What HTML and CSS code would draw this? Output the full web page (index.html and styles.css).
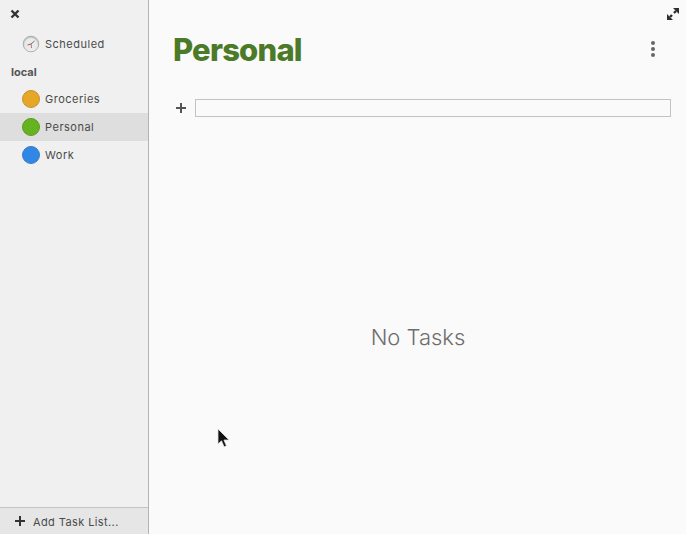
FILE: index.html
```html
<!DOCTYPE html>
<html lang="en">
<head>
	<meta charset="UTF-8">
	<title>Tasks</title>
	<link rel="stylesheet" href="styles.css">
</head>
<body>
	<div class="container">
		<aside class="sidebar">
			<div class="close-row">
				<svg width="10" height="10" viewBox="0 0 10 10"><path d="M1.500 1.500l7 7M8.500 1.500l-7 7" stroke="#333" stroke-width="2.400" fill="none"/></svg>
			</div>
			<div class="lists">
				<div class="item">
					<svg class="dot" width="18" height="18" viewBox="0 0 18 18">
						<defs><linearGradient id="face" x1="0" y1="0" x2="0" y2="1"><stop offset="0" stop-color="#c4c4c4"/><stop offset="1" stop-color="#f4f4f4"/></linearGradient></defs>
						<circle cx="9" cy="9" r="7.800" fill="url(#face)" stroke="#a0a0a0" stroke-width="0.800"/>
						<circle cx="9" cy="9" r="6" fill="#ebebeb"/>
						<path d="M9 9L12.500 6M9 9L5.500 10" stroke="#6e6e6e" stroke-width="1" fill="none"/>
						<path d="M9 9L9.500 13" stroke="#c66" stroke-width="1" fill="none"/>
					</svg>
					<span>Scheduled</span>
				</div>
				<div class="heading">local</div>
				<div class="item"><i class="dot orange"></i><span>Groceries</span></div>
				<div class="item active"><i class="dot green"></i><span>Personal</span></div>
				<div class="item"><i class="dot blue"></i><span>Work</span></div>
			</div>
			<footer class="add-list">
				<svg width="10" height="10" viewBox="0 0 10 10"><path d="M5 0v10M0 5h10" stroke="#333" stroke-width="2" fill="none"/></svg>
				<span>Add Task List...</span>
			</footer>
		</aside>
		<main class="content">
			<svg class="expand" width="14" height="14" viewBox="0 0 14 14">
				<path d="M7 1h6v6zM1 13h6L1 7z" fill="#2e2e2e"/>
				<path d="M10 4L8 6M4 10l2-2" stroke="#2e2e2e" stroke-width="2.400" fill="none"/>
			</svg>
			<header class="title-row">
				<h1>Personal</h1>
				<div class="menu"><i></i><i></i><i></i></div>
			</header>
			<div class="new-task">
				<svg width="12" height="12" viewBox="0 0 12 12"><path d="M6 1v10M1 6h10" stroke="#555" stroke-width="2" fill="none"/></svg>
				<div class="entry"></div>
			</div>
			<div class="empty">No Tasks</div>
		</main>
	</div>
	<svg class="cursor" width="14" height="21" viewBox="0 0 14 21"><path d="M1 1v15l3.500-3.200 2.600 6 2.300-1-2.500-5.800H12z" fill="#111" stroke="#ddd" stroke-width="0.800"/></svg>
</body>
</html>
```

FILE: styles.css
```css
*{
	margin:0;
	padding:0;
	box-sizing:border-box;
}
html,body{
	width:100%;
	height:100%;
	overflow:hidden;
}
body{
	font-family:Inter,"Open Sans",sans-serif;
	color:#333;
	background:#fafafa;
}
.container{
	width:100%;
	height:100%;
	display:flex;
}
.sidebar{
	width:149px;
	display:flex;
	flex-direction:column;
	background:#f0f0f0;
	border-right:1px solid #b3b3b3;
}
.close-row{
	height:30px;
	padding:9px 0 0 10px;
}
.close-row svg{
	display:block;
}
.lists{
	flex:1;
}
.item{
	height:28px;
	display:flex;
	align-items:center;
	gap:5px;
	padding-left:22px;
	font-size:11px;
	letter-spacing:.5px;
	color:#4a4a4a;
}
.item.active{
	background:#dedede;
}
.dot{
	display:block;
	width:18px;
	height:18px;
	border-radius:50%;
	flex:none;
}
.orange{
	background:#e6a626;
	border:1px solid #c79232;
}
.green{
	background:#64b31f;
	border:1px solid #5d9a2b;
}
.blue{
	background:#3187e6;
	border:1px solid #3a7cc4;
}
.heading{
	height:27px;
	line-height:28px;
	padding-left:11px;
	font-size:11px;
	font-weight:700;
	color:#555;
}
.add-list{
	height:27px;
	display:flex;
	align-items:center;
	gap:8px;
	padding-left:15px;
	background:#e6e6e6;
	border-top:1px solid #c4c4c4;
	font-size:11px;
	letter-spacing:.4px;
	color:#4a4a4a;
}
.add-list span{
	padding-top:1px;
}
.content{
	flex:1;
	position:relative;
	display:flex;
	flex-direction:column;
	padding:0 15px 0 24px;
}
.expand{
	position:absolute;
	top:7px;
	right:6px;
}
.title-row{
	height:99px;
	display:flex;
	justify-content:space-between;
	padding-top:30px;
}
h1{
	font-size:31px;
	line-height:40px;
	font-weight:800;
	letter-spacing:-.8px;
	color:#4b7a28;
}
.menu{
	display:flex;
	flex-direction:column;
	gap:2px;
	padding:11px 16px 0 0;
}
.menu i{
	display:block;
	width:4px;
	height:4px;
	border-radius:50%;
	background:#666;
}
.new-task{
	display:flex;
	align-items:center;
	gap:8px;
	padding-left:2px;
}
.entry{
	flex:1;
	height:18px;
	background:#fafafa;
	border:1px solid #c2c2c2;
}
.empty{
	flex:1;
	display:flex;
	align-items:center;
	justify-content:center;
	padding:22px 8px 0 0;
	font-size:22px;
	font-weight:300;
	color:#6e6e6e;
}
.cursor{
	position:absolute;
	left:217px;
	top:428px;
}
```
